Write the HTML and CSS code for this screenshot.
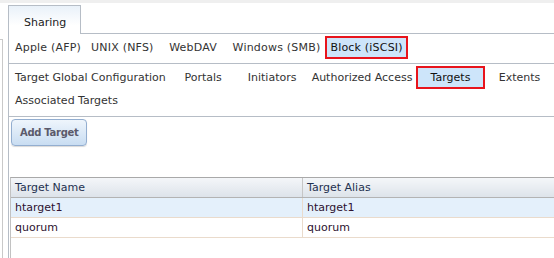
FILE: index.html
```html
<!DOCTYPE html>
<html lang="en">
<head>
  <meta charset="UTF-8" />
  <title>Sharing - Block (iSCSI)</title>
  <link rel="stylesheet" href="styles.css">
</head>
<body>

  <div class="topbar"></div>

  <div class="layout">
    <div class="side"></div>

    <div class="main">
      <!-- Top tabs -->
      <div class="tabstrip">
        <div class="tab">Sharing</div>
        <div class="tabfill"></div>
      </div>

      <div class="pane">
        <!-- Sharing types -->
        <div class="subtabs types">
          <div class="tabline">
            <span class="stab">Apple (AFP)</span>
            <span class="stab">UNIX (NFS)</span>
            <span class="stab">WebDAV</span>
            <span class="stab">Windows (SMB)</span>
            <span class="stab selected">Block (iSCSI)</span>
          </div>
        </div>

        <!-- iSCSI sections -->
        <div class="subtabs">
          <div class="tabline">
            <span class="stab">Target Global Configuration</span>
            <span class="stab">Portals</span>
            <span class="stab">Initiators</span>
            <span class="stab">Authorized Access</span>
            <span class="stab selected">Targets</span>
            <span class="stab">Extents</span>
          </div>
          <div class="tabline">
            <span class="stab">Associated Targets</span>
          </div>
        </div>

        <div class="toolbar">
          <button class="btn">Add Target</button>
        </div>

        <div class="grid">
          <table>
            <thead>
              <tr><th class="col-name">Target Name</th><th>Target Alias</th></tr>
            </thead>
            <tbody>
              <tr class="hover"><td>htarget1</td><td>htarget1</td></tr>
              <tr><td>quorum</td><td>quorum</td></tr>
            </tbody>
          </table>
        </div>
      </div>
    </div>
  </div>

</body>
</html>
```

FILE: styles.css
```css
html, body { margin: 0; padding: 0; height: 100%; overflow: hidden; }
body { font-family: 'DejaVu Sans', Verdana, sans-serif; font-size: 11px; color: #333; background: #fff; display: flex; flex-direction: column; }

.topbar { height: 3px; background: #efefef; flex: none; }

.layout { flex: 1; display: flex; min-height: 0; }
.side { width: 2px; margin-top: 36px; border-top: 1px solid #c9c9c9; border-right: 1px solid #c9c9c9; flex: none; }
.main { flex: 1; margin-left: 5px; margin-top: 2px; display: flex; flex-direction: column; min-width: 0; }

/* top tab strip */
.tabstrip { display: flex; height: 29px; flex: none; }
.tab { width: 73px; border: 1px solid #b6bdc6; border-bottom: none; background: linear-gradient(#e9f1f9, #fff 70%); padding-left: 15px; box-sizing: border-box; line-height: 33px; color: #222; }
.tabfill { flex: 1; border-bottom: 1px solid #b6bdc6; }

.pane { flex: 1; border-left: 1px solid #b6bdc6; display: flex; flex-direction: column; }

/* sub tab rows */
.subtabs { border-bottom: 1px solid #b6bdc6; padding: 2px 0 4px 1px; }
.subtabs.types { letter-spacing: 0.2px; }
.tabline { display: flex; white-space: nowrap; }
.stab { height: 23px; line-height: 23px; padding: 0 5px; min-width: 59px; text-align: center; }
.stab.selected { background: #cde5fa; box-shadow: inset 0 0 0 2px #e8141c; color: #111; }

.toolbar { padding: 2px 0 0 2px; }
.btn { font-family: inherit; font-size: 10px; letter-spacing: -0.3px; font-weight: bold; color: #5b5a6b; height: 27px; padding: 0 8px; border: 1px solid #93aed0; border-radius: 4px; background: linear-gradient(#eef5fc, #c9ddf2); box-shadow: 0 1px 1px rgba(0,0,0,0.15); }

/* data grid */
.grid { flex: 1; margin: 31px 0 0 1px; border-left: 1px solid #c2c2c2; border-top: 1px solid #a9a9a9; overflow: hidden; }
table { border-collapse: collapse; table-layout: fixed; width: 700px; }
th, td { height: 19px; padding: 0 4px; text-align: left; font-weight: normal; white-space: nowrap; }
th { background: linear-gradient(#f4f6f9, #dde3ea); color: #1f3150; border-bottom: 1px solid #b3b3b3; border-right: 1px solid #c6c6c6; }
th.col-name { width: 283px; }
td { color: #2e1230; border-bottom: 1px solid #eadbcc; border-right: 1px solid #eadbcc; }
tr.hover td { background: #e4f0fb; }
```
